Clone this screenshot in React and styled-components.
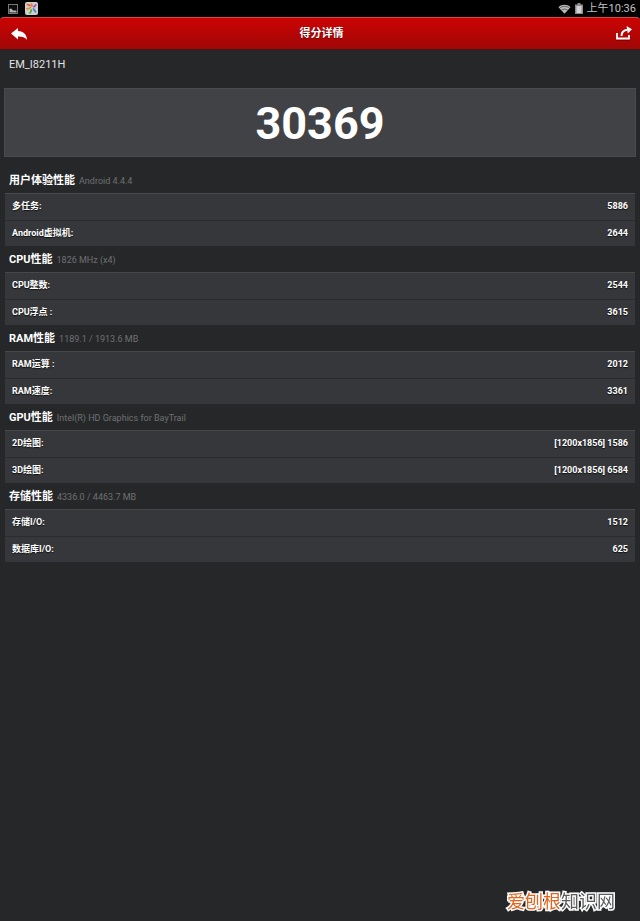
import React from 'react'
import styled, { createGlobalStyle } from 'styled-components';

const sections = [
    {
        title: '用户体验性能',
        note: 'Android 4.4.4',
        rows: [['多任务:', '5886'], ['Android虚拟机:', '2644']],
    },
    {
        title: 'CPU性能',
        note: '1826 MHz (x4)',
        rows: [['CPU整数:', '2544'], ['CPU浮点 :', '3615']],
    },
    {
        title: 'RAM性能',
        note: '1189.1 / 1913.6 MB',
        rows: [['RAM运算 :', '2012'], ['RAM速度:', '3361']],
    },
    {
        title: 'GPU性能',
        note: 'Intel(R) HD Graphics for BayTrail',
        rows: [['2D绘图:', '[1200x1856] 1586'], ['3D绘图:', '[1200x1856] 6584']],
    },
    {
        title: '存储性能',
        note: '4336.0 / 4463.7 MB',
        rows: [['存储I/O:', '1512'], ['数据库I/O:', '625']],
    },
];

function PictureIcon() {
    return (
        <svg width="10" height="10" viewBox="0 0 10 10">
            <rect x="0.5" y="0.5" width="9" height="9" fill="#0c0c0c" stroke="#777" />
            <path d="M1.5 8.5V5L3.2 4.5L5 6.5H8.5V8.5Z" fill="#b5b5b5" />
        </svg>
    )
}

function GalleryIcon() {
    return (
        <svg width="13" height="13" viewBox="0 0 13 13">
            <rect width="13" height="13" rx="2" fill="#cfcfcb" />
            <g fill="none" strokeWidth="1.7" strokeLinecap="round">
                <path d="M2.5 2.5L5 3.5" stroke="#e2574a" />
                <path d="M6.5 1.8L7 4" stroke="#e58a2c" />
                <path d="M10.8 3L8.8 4.8" stroke="#a24bc0" />
                <path d="M2 6.8C3.5 6.8 4.6 6.4 5.5 5.5" stroke="#e88a26" />
                <path d="M5 11C6 9.8 6.3 8.8 6.3 7.8" stroke="#4fae3b" />
                <path d="M8.5 7L10.5 9.8" stroke="#3a86d0" />
            </g>
        </svg>
    )
}

function WifiIcon() {
    return (
        <svg width="13" height="10" viewBox="0 0 14 10">
            <path d="M0.5 3C4 -0.3 10 -0.3 13.5 3L7 10Z" fill="#b9b9b9" />
            <path d="M1.5 4.2C4.8 1.5 9.2 1.5 12.5 4.2M3.5 6.3C5.6 4.7 8.4 4.7 10.5 6.3" fill="none" stroke="#333" strokeWidth="0.7" />
        </svg>
    )
}

function BatteryIcon() {
    return (
        <svg width="8" height="11" viewBox="0 0 8 11">
            <path d="M2.5 0H5.5V1.5H8V11H0V1.5H2.5Z" fill="#8d8d8d" />
            <path d="M1.5 3H6.5V10H1.5Z" fill="#d2d2d2" />
        </svg>
    )
}

function BackIcon() {
    return (
        <svg width="16" height="13" viewBox="0 0 16 13">
            <path d="M0 5.5L7 0V3C12.5 3.2 15.8 6.6 16 12C14 9.2 11 8.4 7 8.5V11.5Z" fill="#fff" />
        </svg>
    )
}

function ShareIcon() {
    return (
        <svg width="16" height="16" viewBox="0 0 16 16">
            <path d="M1 7V12.5H13V9" fill="none" stroke="#fff" strokeWidth="1.8" />
            <path d="M5.5 10C5.5 6.5 7.8 4.2 11.5 3.8" fill="none" stroke="#fff" strokeWidth="2" />
            <path d="M10.5 0L16 3.2L11.8 7.5Z" fill="#fff" />
            <path d="M0 14.5H14" stroke="#800" />
        </svg>
    )
}

function App() {
    return (
        <>
            <GlobalStyle />
            <PageStyled>
                <StatusBar>
                    <PictureIcon />
                    <GalleryIcon />
                    <StatusRight>
                        <WifiIcon />
                        <BatteryIcon />
                        <time>上午10:36</time>
                    </StatusRight>
                </StatusBar>
                <TitleBar>
                    <IconButton aria-label="返回"><BackIcon /></IconButton>
                    <h1>得分详情</h1>
                    <IconButton aria-label="分享"><ShareIcon /></IconButton>
                </TitleBar>
                <main>
                    <Device>EM_I8211H</Device>
                    <Score>30369</Score>
                    {sections.map(({ title, note, rows }) => (
                        <Section key={title}>
                            <SectionHead>
                                <h2>{title}</h2>
                                <span>{note}</span>
                            </SectionHead>
                            <ScoreList>
                                {rows.map(([label, value]) => (
                                    <ScoreRow key={label}>
                                        <dt>{label}</dt>
                                        <dd>{value}</dd>
                                    </ScoreRow>
                                ))}
                            </ScoreList>
                        </Section>
                    ))}
                </main>
                <Watermark><span>爱刨根</span>知识网</Watermark>
            </PageStyled>
        </>
    )
}

const GlobalStyle = createGlobalStyle`
    * {
        box-sizing: border-box;
        margin: 0;
        padding: 0;
    }

    body {
        background: #000;
        color: #fff;
        font-family: Roboto, "Noto Sans CJK SC", sans-serif;
    }

    svg {
        display: block;
    }
`;

const PageStyled = styled.div`
    min-height: 100vh;
    background: #262729;
`;

const StatusBar = styled.div`
    display: flex;
    align-items: center;
    gap: 7px;
    height: 17px;
    padding: 0 4px 0 8px;
    background: #000;
`;

const StatusRight = styled.div`
    display: flex;
    align-items: center;
    gap: 4px;
    margin-left: auto;
    color: #c4c4c4;
    font-size: 11px;
    line-height: 18px;
`;

const TitleBar = styled.header`
    display: flex;
    align-items: center;
    justify-content: space-between;
    height: 33px;
    padding: 1px 8px 0 11px;
    border-top: 1px solid #d84848;
    border-bottom: 1px solid #4a1214;
    border-radius: 4px 4px 0 0;
    background: linear-gradient(#cb0303, #a00707);
    box-shadow: 0 -4px 0 #000;

    h1 {
        font-size: 11px;
        font-weight: 700;
        line-height: 18px;
        text-shadow: 0 1px 1px #600;
    }
`;

const IconButton = styled.button`
    border: 0;
    background: none;
    cursor: pointer;
`;

const Device = styled.p`
    padding: 6px 9px 0;
    height: 38px;
    color: #e4e4e4;
    font-size: 11px;
    line-height: 18px;
`;

const Score = styled.div`
    margin: 0 4px 10px;
    height: 69px;
    border: 1px solid #4a4b4e;
    background: #414245;
    font-size: 45px;
    font-weight: 700;
    line-height: 70px;
    text-align: center;
`;

const Section = styled.section`
    margin: 0 5px;
`;

const SectionHead = styled.div`
    display: flex;
    align-items: center;
    gap: 4px;
    height: 26px;
    padding: 2px 4px 0;
    line-height: 16px;

    h2 {
        font-size: 11px;
        font-weight: 700;
    }

    span {
        color: #707173;
        font-size: 9px;
    }
`;

const ScoreList = styled.dl`
    border-top: 1px solid #47484a;
    background: #36373a;
`;

const ScoreRow = styled.div`
    display: flex;
    align-items: center;
    justify-content: space-between;
    height: 26px;
    padding: 0 7px 2px;
    font-size: 9px;
    font-weight: 700;
    line-height: 16px;
    text-shadow: 0 1px 1px #111;

    & + & {
        border-top: 1px solid #2a2b2d;
    }
`;

const Watermark = styled.div`
    position: fixed;
    right: 25px;
    bottom: 6px;
    color: #5c5c5c;
    font-size: 18px;
    line-height: 26px;
    -webkit-text-stroke: 3px #fff;
    paint-order: stroke fill;

    span {
        color: #e2641e;
    }
`;

export default App;
